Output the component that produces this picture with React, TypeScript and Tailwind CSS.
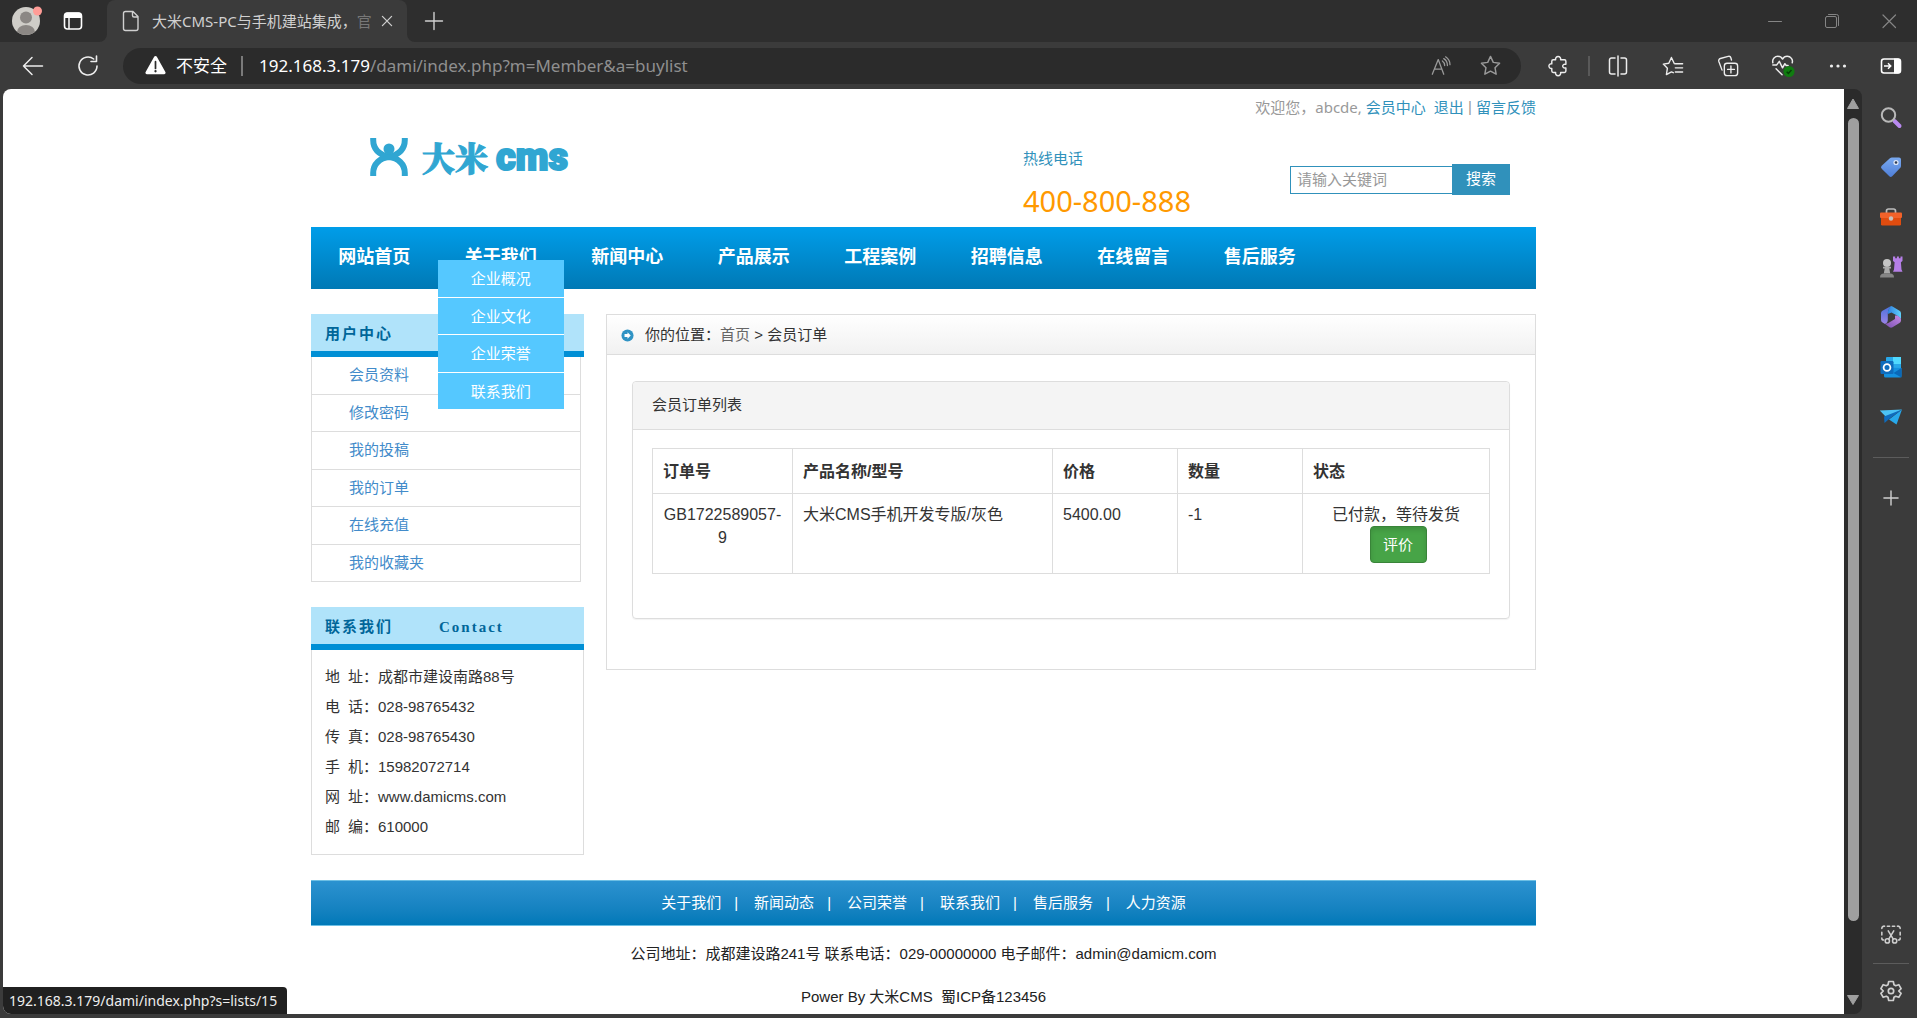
import type { ReactNode } from "react";

const NAV = ["网站首页", "关于我们", "新闻中心", "产品展示", "工程案例", "招聘信息", "在线留言", "售后服务"];
const ABOUT_MENU = ["企业概况", "企业文化", "企业荣誉", "联系我们"];
const MEMBER_MENU = ["会员资料", "修改密码", "我的投稿", "我的订单", "在线充值", "我的收藏夹"];
const CONTACT: [string, string, string][] = [
  ["地", "址", "成都市建设南路88号"],
  ["电", "话", "028-98765432"],
  ["传", "真", "028-98765430"],
  ["手", "机", "15982072714"],
  ["网", "址", "www.damicms.com"],
  ["邮", "编", "610000"],
];
const FOOTER_LINKS = ["关于我们", "新闻动态", "公司荣誉", "联系我们", "售后服务", "人力资源"];

type IconProps = { children: ReactNode; size?: string; stroke?: string };

function Line({ children, size = "size-6", stroke = "1.5" }: IconProps) {
  return (
    <svg
      viewBox="0 0 24 24"
      className={size}
      fill="none"
      stroke="currentColor"
      strokeWidth={stroke}
      strokeLinecap="round"
      strokeLinejoin="round"
      aria-hidden="true"
    >
      {children}
    </svg>
  );
}

function ChromeButton({ label, className, children }: { label: string; className: string; children: ReactNode }) {
  return (
    <button type="button" aria-label={label} className={`flex shrink-0 items-center justify-center ${className}`}>
      {children}
    </button>
  );
}

function TabStrip() {
  return (
    <div className="flex h-[42px] shrink-0 bg-[linear-gradient(#2e2e2e_50%,#3b3b3b_50%)]">
      <div className="flex w-[107px] shrink-0 items-center rounded-br-lg bg-[#2e2e2e] pl-3">
        <ChromeButton label="个人资料" className="size-8">
          <svg viewBox="0 0 32 32" className="size-8" aria-hidden="true">
            <defs>
              <clipPath id="avatar">
                <circle cx="14" cy="16" r="14" />
              </clipPath>
            </defs>
            <g clipPath="url(#avatar)">
              <rect width="32" height="32" fill="#cfcdc8" />
              <circle cx="14" cy="12.500" r="6" fill="#8b8784" />
              <ellipse cx="14" cy="27" rx="9" ry="7" fill="#8b8784" />
            </g>
            <circle cx="25.500" cy="6" r="4.500" fill="#ff9c96" />
          </svg>
        </ChromeButton>
        <ChromeButton label="标签页操作" className="ml-[17px] size-6">
          <svg viewBox="0 0 24 24" className="size-6" aria-hidden="true">
            <rect x="3.500" y="4" width="17" height="16" rx="3" fill="none" stroke="#fff" strokeWidth="1.600" />
            <path d="M3 7a3.500 3.500 0 0 1 3.500-3.500h11A3.500 3.500 0 0 1 21 7v2H3z" fill="#fff" />
            <path d="M8 9v11" stroke="#fff" strokeWidth="1.500" />
          </svg>
        </ChromeButton>
      </div>
      <div className="flex w-[300px] shrink-0 items-center rounded-t-lg bg-[#3b3b3b] pr-2 pl-3 text-[#d0d0d0]">
        <Line stroke="1.4">
          <path d="M6.500 2.500h7.500l5 5v12a2 2 0 0 1-2 2H6.500a2 2 0 0 1-2-2v-15a2 2 0 0 1 2-2zM13.500 2.500v4a1.500 1.500 0 0 0 1.500 1.500h4" />
        </Line>
        <span className="ml-[9px] min-w-0 flex-1 text-[15px] whitespace-nowrap">
          大米CMS-PC与手机建站集成，
          <span className="text-[#777]">官</span>
        </span>
        <ChromeButton label="关闭标签页" className="size-6">
          <Line size="size-5">
            <path d="m6.500 6.500 11 11M17.500 6.500l-11 11" />
          </Line>
        </ChromeButton>
      </div>
      <div className="flex min-w-0 flex-1 items-center rounded-bl-lg bg-[#2e2e2e] text-[#d0d0d0]">
        <ChromeButton label="新建标签页" className="w-[53px]">
          <Line stroke="1.400">
            <path d="M12 3.500v17M3.500 12h17" />
          </Line>
        </ChromeButton>
        <div className="ml-auto flex text-[#858585]">
          <ChromeButton label="最小化" className="w-[57px]">
            <Line stroke="1">
              <path d="M5.500 12.500h13" />
            </Line>
          </ChromeButton>
          <ChromeButton label="还原" className="w-[57px]">
            <Line stroke="1">
              <rect x="5.500" y="7.500" width="11" height="11" rx="1.500" />
              <path d="M8.500 5.500h8a2 2 0 0 1 2 2v9" />
            </Line>
          </ChromeButton>
          <ChromeButton label="关闭" className="w-[57px]">
            <Line stroke="1.200">
              <path d="m6 6 12.500 12.500M18.500 6 6 18.500" />
            </Line>
          </ChromeButton>
        </div>
      </div>
    </div>
  );
}

function Toolbar() {
  return (
    <div className="flex h-[47px] shrink-0 items-center text-[#ededed]">
      <ChromeButton label="后退" className="w-[66px]">
        <Line stroke="1.500">
          <path d="M21.500 12h-19M11 3.500 2.500 12l8.500 8.500" />
        </Line>
      </ChromeButton>
      <ChromeButton label="刷新" className="w-[44px]">
        <Line stroke="1.600">
          <path d="M21 12a9 9 0 1 1-3.300-7M20.500 2v5.500h-5.500" />
        </Line>
      </ChromeButton>
      <div className="ml-[13px] flex h-9 min-w-0 flex-1 items-center rounded-full bg-[#2b2b2b] pr-[14px] pl-[21px]">
        <svg viewBox="0 0 24 24" className="size-[23px] shrink-0" aria-hidden="true">
          <path d="M10.600 2.800a1.600 1.600 0 0 1 2.800 0l8.900 16a1.600 1.600 0 0 1-1.400 2.400H3.100a1.600 1.600 0 0 1-1.400-2.400z" fill="#fff" />
          <path d="M12 8v7" stroke="#2b2b2b" strokeWidth="1.800" strokeLinecap="round" />
          <circle cx="12" cy="18" r="1.200" fill="#2b2b2b" />
        </svg>
        <span className="ml-[9px] shrink-0 text-[17px] text-white">不安全</span>
        <span className="mr-4 ml-[14px] h-5 w-[2px] shrink-0 bg-[#7a7a7a]" />
        <span className="min-w-0 flex-1 truncate text-[17px] text-[#8f8f8f]">
          <span className="text-white">192.168.3.179</span>/dami/index.php?m=Member&amp;a=buylist
        </span>
        <div className="flex gap-[7px] text-[#9a9a9a]">
          <ChromeButton label="大声朗读" className="w-[50px]">
            <Line size="size-[22px]" stroke="1.400">
              <path d="M2.500 21 9 5l6 16M5 15.500h8M13.500 6.500c1.500 1 2.500 2.800 2.500 5M15 4c2.500 1.500 4 4 4 7.500M17 2c3 2 4.800 5 4.800 8.500" />
            </Line>
          </ChromeButton>
          <ChromeButton label="收藏此页" className="w-[34px]">
            <Line size="size-[23px]" stroke="1.500">
              <path d="m12 2.500 2.900 6.200 6.600.9-4.800 4.700 1.200 6.800L12 17.900l-5.900 3.200 1.200-6.800-4.800-4.700 6.600-.9z" />
            </Line>
          </ChromeButton>
        </div>
      </div>
      <ChromeButton label="扩展" className="ml-[7px] w-[60px]">
        <Line size="size-[23px]">
          <path d="M5 7.500A1.500 1.500 0 0 1 6.500 6H9a2.700 2.700 0 1 1 5.200 0h4a1.500 1.500 0 0 1 1.500 1.500v3.300h-1a1.900 1.900 0 1 0 0 3.700h1v3.300a1.500 1.500 0 0 1-1.500 1.500h-4a2.700 2.700 0 1 1-5.200 0H6.500A1.500 1.500 0 0 1 5 17.800v-2.700a2.500 2.500 0 1 1 0-4.900z" />
        </Line>
      </ChromeButton>
      <span className="h-5 w-[2px] shrink-0 bg-[#595959]" />
      <ChromeButton label="分屏" className="w-[55px]">
        <Line>
          <path d="M9 4H5.500a2 2 0 0 0-2 2v12a2 2 0 0 0 2 2H9M15 4h3.500a2 2 0 0 1 2 2v12a2 2 0 0 1-2 2H15M12 2v20" />
        </Line>
      </ChromeButton>
      <ChromeButton label="收藏夹" className="w-[55px]">
        <Line size="size-[22px]">
          <path d="M13.500 9.500 10.300 2.700 7.400 9l-6 .9 4.500 4.500-1.100 7 5.500-3 2 .9M14.500 9.500h8M14.500 14h8M14.500 18.500h8" />
        </Line>
      </ChromeButton>
      <ChromeButton label="集锦" className="w-[55px]">
        <Line size="size-[22px]">
          <rect x="8" y="9" width="14.500" height="13.500" rx="3" />
          <path d="M15.200 12v7.500M11.500 15.700h7.500M5.500 16.500 2 7a2.500 2.500 0 0 1 1.700-3.200l8.500-2.300a2.500 2.500 0 0 1 3 1.800l.6 2.200" />
        </Line>
      </ChromeButton>
      <ChromeButton label="浏览器概要" className="w-[55px]">
        <svg viewBox="0 0 26 26" className="size-6" fill="none" aria-hidden="true">
          <path
            d="M2 9.500C1 5 4.500 2.500 7.500 2.500c2.500 0 4 1.300 5 3 1-1.700 2.500-3 5-3 4 0 6.500 3.500 5.500 7M2 12h4l3-4 3.500 7 2.500-4.500 1.500 2h2M5.500 16l6.500 6.500"
            stroke="#ededed"
            strokeWidth="1.600"
            strokeLinecap="round"
            strokeLinejoin="round"
          />
          <circle cx="19.500" cy="19" r="6" fill="#107c10" />
          <path d="m17 19.200 1.800 1.800 3.400-3.700" stroke="#063f06" strokeWidth="1.600" />
        </svg>
      </ChromeButton>
      <ChromeButton label="设置及其他" className="w-[55px]">
        <svg viewBox="0 0 24 24" className="size-6" fill="currentColor" aria-hidden="true">
          <circle cx="5.500" cy="12" r="1.600" />
          <circle cx="12" cy="12" r="1.600" />
          <circle cx="18.500" cy="12" r="1.600" />
        </svg>
      </ChromeButton>
      <ChromeButton label="侧边栏" className="w-[52px]">
        <svg viewBox="0 0 24 24" className="size-6" fill="none" aria-hidden="true">
          <rect x="2.500" y="5" width="19" height="14" rx="2.500" stroke="#fff" strokeWidth="1.600" />
          <path d="M15 4.500h4a2.500 2.500 0 0 1 2.500 2.500v10a2.500 2.500 0 0 1-2.500 2.500h-4z" fill="#fff" />
          <path d="M5 12h6.500M9 9.200l2.800 2.800L9 14.800" stroke="#fff" strokeWidth="1.400" />
        </svg>
      </ChromeButton>
    </div>
  );
}

function EdgeSidebar() {
  const slot = "h-[50px] w-full";
  return (
    <aside className="ml-[3px] flex w-[52px] shrink-0 flex-col items-center pt-[3px] text-[#cfcfcf]">
      <ChromeButton label="搜索" className={slot}>
        <svg viewBox="0 0 24 24" className="size-6" fill="none" aria-hidden="true">
          <path d="m15.500 16 5 5" stroke="#b98af0" strokeWidth="4" strokeLinecap="round" />
          <circle cx="9.500" cy="10" r="6.700" stroke="#b9b9b9" strokeWidth="2" />
        </svg>
      </ChromeButton>
      <ChromeButton label="购物" className={slot}>
        <svg viewBox="0 0 24 24" className="size-6" aria-hidden="true">
          <defs>
            <linearGradient id="tag" x1="0" y1="0" x2="0" y2="1">
              <stop offset="0" stopColor="#79a9f0" />
              <stop offset="1" stopColor="#4f7fd8" />
            </linearGradient>
          </defs>
          <path d="M13 2.500h7a2 2 0 0 1 2 2v6.500a3 3 0 0 1-.9 2.100l-7.900 8.200a2 2 0 0 1-2.900 0l-7.600-7.600a2 2 0 0 1 0-2.900l8.200-7.500a3 3 0 0 1 2.100-.8z" fill="url(#tag)" />
          <circle cx="17" cy="7.500" r="2.600" fill="#dfe8f8" />
          <circle cx="17" cy="7.500" r="1.300" fill="#2d3b55" />
        </svg>
      </ChromeButton>
      <ChromeButton label="工具" className={slot}>
        <svg viewBox="0 0 24 24" className="size-6" aria-hidden="true">
          <path d="M7.500 8V6a2 2 0 0 1 2-2h5a2 2 0 0 1 2 2v2" fill="none" stroke="#bdbdbd" strokeWidth="1.700" />
          <rect x="2" y="11" width="20" height="9.500" rx="1.200" fill="#e04c0f" />
          <rect x="1" y="7.500" width="22" height="5.500" rx="1" fill="#f2622a" />
          <circle cx="12" cy="13.500" r="2.200" fill="#c9c2be" />
        </svg>
      </ChromeButton>
      <ChromeButton label="游戏" className={slot}>
        <svg viewBox="0 0 24 24" className="size-6" aria-hidden="true">
          <path d="M14 1.500h2.200v1.700h1.700V1.500h2v1.700h1.600V1.500h2V6l-1.600 1.200.6 7.300 1 2.300h-9.500l1-2.300.6-7.300L14 6z" fill="#b57fe6" />
          <circle cx="8" cy="8" r="4" fill="#c4c4c4" />
          <path d="M4 11.700h8v1.800h-1.700l.9 5H4.800l.9-5H4z" fill="#aaa" />
          <path d="M1 22.500c0-3 1.800-4 3.500-4h7c1.700 0 3.500 1 3.500 4z" fill="#858585" />
        </svg>
      </ChromeButton>
      <ChromeButton label="Microsoft 365" className={slot}>
        <svg viewBox="0 0 24 24" className="size-6" aria-hidden="true">
          <defs>
            <linearGradient id="m1" x1="0" y1="0" x2="1" y2="0">
              <stop offset="0" stopColor="#2e7fe0" />
              <stop offset="1" stopColor="#5fd0fa" />
            </linearGradient>
            <linearGradient id="m2" x1="0" y1="0" x2="0" y2="1">
              <stop offset="0" stopColor="#4a72dd" />
              <stop offset="1" stopColor="#9a83e6" />
            </linearGradient>
            <linearGradient id="m3" x1="0" y1="1" x2="1" y2="0">
              <stop offset="0" stopColor="#7a4fb0" />
              <stop offset="1" stopColor="#c58ae6" />
            </linearGradient>
          </defs>
          <path d="M12 1 3.500 5.700A3 3 0 0 0 2 8.300V15a3 3 0 0 0 1.500 2.600L6 19c2.200-.9 2.800-2.500 2.800-4.500V9c0-3 1-5 3.200-8z" fill="url(#m2)" />
          <path d="M12 1c-2.500 2.500-3.200 5-3.200 8l3.700-1.600L18 10.500c2 1.200 3.500 2.500 4 4.500V8.300a3 3 0 0 0-1.500-2.600L13.500 1.400A3 3 0 0 0 12 1z" fill="url(#m1)" />
          <path d="M22 14.500c-.3-1.800-2-3-4-4l-2 0v3.500l-5 3c-2 1.200-4 2-5.500 1.500l5 3.700a3 3 0 0 0 3 0l7-4.200A3 3 0 0 0 22 15.500z" fill="url(#m3)" />
        </svg>
      </ChromeButton>
      <ChromeButton label="Outlook" className={slot}>
        <svg viewBox="0 0 24 24" className="size-6" aria-hidden="true">
          <rect x="7" y="2" width="15" height="13" rx="1" fill="#28a8ea" />
          <rect x="14" y="2" width="8" height="7" fill="#50d9ff" />
          <path d="M5 12.500 22.500 13v8a1.500 1.500 0 0 1-1.500 1.500H6.500A1.500 1.500 0 0 1 5 21z" fill="#1490df" />
          <path d="m22.500 13-8 5 8 4.500z" fill="#0a68b8" />
          <rect x="1.500" y="6" width="13" height="13" rx="1.200" fill="#0f6cbd" />
          <circle cx="8" cy="12.500" r="3.400" fill="none" stroke="#fff" strokeWidth="1.800" />
        </svg>
      </ChromeButton>
      <ChromeButton label="Drop" className={slot}>
        <svg viewBox="0 0 24 24" className="size-6" aria-hidden="true">
          <path d="M.800 5.500 23 4.500 8 13z" fill="#4cc3f5" />
          <path d="M23 4.500 17.500 19.500 10 14.500z" fill="#28a8ea" />
          <path d="M23 4.500 5 11.500l.5 6.500 4-3.500z" fill="#0f6cbd" />
        </svg>
      </ChromeButton>
      <hr className="mt-[15px] w-9 border-[#5c5c5c]" />
      <ChromeButton label="自定义" className="mt-[15px] h-[50px] w-full">
        <Line size="size-5" stroke="1.700">
          <path d="M12 3.500v17M3.500 12h17" />
        </Line>
      </ChromeButton>
      <ChromeButton label="截图" className="mt-auto h-[50px] w-full">
        <Line size="size-[22px]" stroke="1.700">
          <path d="M5 3.500a2.500 2.500 0 0 0-3 2.500M2 10v3M2 16.500a2 2 0 0 0 2 2M8 3.500h2.500M13.500 3.500H16M19 3.500A2.500 2.500 0 0 1 22 6M22 10v3M22 16.500a2 2 0 0 1-2 2" />
          <path d="m9 8.500 5.500 9M15 8.500l-5.500 9" />
          <circle cx="8" cy="19.500" r="2.300" />
          <circle cx="16" cy="19.500" r="2.300" />
        </Line>
      </ChromeButton>
      <hr className="mt-1 w-9 border-[#5c5c5c]" />
      <ChromeButton label="设置" className="h-[54px] w-full">
        <Line size="size-6" stroke="1.700">
          <path d="M9.700 2.500h4.600l.7 3.200 1.700 1 3.100-1 2.300 4-2.400 2.300 2.400 2.300-2.300 4-3.100-1-1.700 1-.7 3.200H9.700L9 18.300l-1.700-1-3.100 1-2.300-4L4.300 12 1.900 9.700l2.300-4 3.100 1 1.700-1z" />
          <circle cx="12" cy="12" r="2.700" />
        </Line>
      </ChromeButton>
    </aside>
  );
}

function Scrollbar() {
  return (
    <div className="flex w-[18px] shrink-0 flex-col items-center rounded-r-lg bg-[#2b2b2b] pt-[9px] pb-2">
      <svg viewBox="0 0 12 12" className="size-3" fill="#9f9f9f" aria-hidden="true">
        <path d="M6 1 11.500 10.500H.500z" stroke="#9f9f9f" strokeLinejoin="round" />
      </svg>
      <div className="mt-2 mb-[73px] w-[11px] flex-1 rounded-full bg-[#9f9f9f]" />
      <svg viewBox="0 0 12 12" className="size-3" fill="#9f9f9f" aria-hidden="true">
        <path d="M6 10.500 11.500 1.500H.500z" stroke="#9f9f9f" strokeLinejoin="round" />
      </svg>
    </div>
  );
}

function SiteHeader() {
  return (
    <header>
      <div className="flex h-[37px] items-center justify-end font-['Noto_Sans','Noto_Sans_CJK_SC',sans-serif] text-[15px] whitespace-pre text-[#999]">
        <span>欢迎您，abcde, </span>
        <a href="#member" className="text-[#3091bb]">会员中心</a>
        <a href="#logout" className="ml-2 text-[#3091bb]">退出</a>
        <span className="font-['Liberation_Sans',sans-serif]"> | </span>
        <a href="#feedback" className="text-[#3091bb]">留言反馈</a>
      </div>
      <div className="grid min-h-[101px] grid-cols-[712px_1fr_auto] items-start">
        <a href="#home" aria-label="大米CMS" className="flex items-center pt-[11px] pl-[58px] text-[#30a6d2]">
          <svg viewBox="0 0 40 40" className="size-10" fill="none" aria-hidden="true">
            <path d="M4.200 1v2C4.200 12 10 17.500 20 20 30 17.500 35.800 12 35.800 3V1M4.200 39v-3C4.200 27 11 21 20 20c9 1 15.800 7 15.800 16v3" stroke="currentColor" strokeWidth="6" />
            <circle cx="20" cy="12" r="5.500" fill="currentColor" />
          </svg>
          <span className="ml-[13px] font-['Noto_Serif_CJK_SC','Noto_Sans_CJK_SC',serif] text-[33px] leading-10 font-black [-webkit-text-stroke:1px_#30a6d2]">大米</span>
          <span className="ml-2 font-['Roboto',sans-serif] text-[38px] leading-10 font-black [-webkit-text-stroke:2px_#30a6d2]">cms</span>
        </a>
        <div className="pt-[22px] font-['Noto_Sans','Noto_Sans_CJK_SC',sans-serif]">
          <p className="text-[15px] leading-5 text-[#3091bb]">热线电话</p>
          <p className="mt-[13px] text-[29px] leading-10 text-[#ff9900]">400-800-888</p>
        </div>
        <form className="flex items-center pt-[38px] pr-[26px] text-[15px]" onSubmit={(e) => e.preventDefault()}>
          <input
            type="text"
            aria-label="关键词"
            placeholder="请输入关键词"
            className="h-7 w-[162px] border border-r-0 border-[#3091bb] px-[6px] placeholder:text-[#999]"
          />
          <button type="submit" className="h-[31px] w-[58px] bg-[#3091bb] text-white">搜索</button>
        </form>
      </div>
      <nav className="h-[62px] bg-linear-to-b from-[#009de9] to-[#0079b5]">
        <ul className="grid max-w-[1012px] grid-cols-8 text-lg font-bold text-white">
          {NAV.map((name) => (
            <li key={name} className="relative">
              <a href={`#${name}`} className="flex h-[60px] items-center justify-center">{name}</a>
              {name === "关于我们" && (
                <ul className="absolute top-[33px] left-0 z-10 grid h-[149px] w-full auto-rows-fr gap-px bg-white text-[15px] font-normal">
                  {ABOUT_MENU.map((item) => (
                    <li key={item} className="bg-[#55c8ff]">
                      <a href={`#${item}`} className="flex h-full items-center justify-center pt-px">{item}</a>
                    </li>
                  ))}
                </ul>
              )}
            </li>
          ))}
        </ul>
      </nav>
    </header>
  );
}

function BoxTitle({ children }: { children: ReactNode }) {
  return (
    <h2 className="flex h-[43px] items-center border-b-[6px] border-[#008fd5] bg-[#b0e3fa] px-[14px] pt-1 font-['Liberation_Serif','Noto_Sans_CJK_SC',serif] text-[15px] font-bold tracking-[2px] text-[#006699]">
      {children}
    </h2>
  );
}

function Sidebar() {
  return (
    <div className="flex w-[273px] shrink-0 flex-col gap-[25px]">
      <section>
        <BoxTitle>用户中心</BoxTitle>
        <ul className="mr-[3px] grid h-[225px] auto-rows-fr border-x border-[#ddd]">
          {MEMBER_MENU.map((item) => (
            <li key={item} className="flex items-center border-b border-[#ddd] pl-[37px] text-[15px]">
              <a href={`#${item}`} className="text-[#428bca]">{item}</a>
            </li>
          ))}
        </ul>
      </section>
      <section>
        <BoxTitle>
          联系我们<span className="ml-[46px]">Contact</span>
        </BoxTitle>
        <dl className="border-x border-b border-[#ddd] px-[13px] py-3 text-[15px] leading-[30px] text-[#333]">
          {CONTACT.map(([a, b, value]) => (
            <div key={a + b} className="flex">
              <dt className="flex w-[53px]">
                <span>{a}</span>
                <span className="ml-2">{b}：</span>
              </dt>
              <dd>{value}</dd>
            </div>
          ))}
        </dl>
      </section>
    </div>
  );
}

function Orders() {
  return (
    <main className="min-w-0 flex-1 self-start border border-[#ddd]">
      <div className="flex h-10 items-center border-b border-[#ddd] bg-linear-to-b from-white to-[#f1f1f1] pt-[2px] pl-[14px] text-[15px] whitespace-pre text-[#333]">
        <svg viewBox="0 0 14 14" className="mr-[11px] size-[13px]" aria-hidden="true">
          <circle cx="7" cy="7" r="6.500" fill="#2f93c4" />
          <path d="M7 3.500 10.500 7 7 10.500V8.500H3.800v-3H7z" fill="#fff" />
        </svg>
        <span>你的位置：</span>
        <a href="#home" className="text-[#666]">首页</a>
        <span> &gt; 会员订单</span>
      </div>
      <section className="mx-[25px] mt-[26px] mb-[50px] rounded border border-[#ddd] shadow-[0_1px_1px_rgba(0,0,0,0.05)]">
        <h1 className="flex h-[48px] items-center rounded-t border-b border-[#ddd] bg-[#f4f4f4] px-[19px] text-[15px] text-[#333]">会员订单列表</h1>
        <div className="px-[19px] pt-[18px] pb-11">
          <table className="w-full table-fixed border-collapse text-base leading-[23px] text-[#333] [&_td]:border [&_td]:border-[#ddd] [&_td]:px-[10px] [&_td]:pt-[9px] [&_td]:pb-[10px] [&_td]:align-top [&_th]:border [&_th]:border-[#ddd] [&_th]:px-[10px] [&_th]:text-left">
            <colgroup>
              <col className="w-[140px]" />
              <col className="w-[260px]" />
              <col className="w-[125px]" />
              <col className="w-[125px]" />
              <col />
            </colgroup>
            <thead>
              <tr className="h-[45px]">
                <th scope="col">订单号</th>
                <th scope="col">产品名称/型号</th>
                <th scope="col">价格</th>
                <th scope="col">数量</th>
                <th scope="col">状态</th>
              </tr>
            </thead>
            <tbody>
              <tr>
                <td className="text-center">GB1722589057-9</td>
                <td>大米CMS手机开发专版/灰色</td>
                <td>5400.00</td>
                <td>-1</td>
                <td className="text-center">
                  <p>已付款，等待发货</p>
                  <div className="flex justify-center pl-1">
                    <button
                      type="button"
                      className="h-[37px] w-[57px] rounded border border-[#398439] bg-[#47a447] text-[15px] text-white shadow-[inset_0_3px_5px_rgba(0,0,0,0.125)]"
                    >
                      评价
                    </button>
                  </div>
                </td>
              </tr>
            </tbody>
          </table>
        </div>
      </section>
    </main>
  );
}

function SiteFooter() {
  return (
    <footer className="mt-[25px] text-[15px] text-[#222]">
      <ul className="flex h-[46px] items-center justify-center border-y border-[#6dbfe4] bg-linear-to-b from-[#2b92d0] to-[#0079b8] text-white">
        {FOOTER_LINKS.map((item, i) => (
          <li key={item} className="flex">
            {i > 0 && <span className="mr-4 ml-[13px]">|</span>}
            <a href={`#${item}`}>{item}</a>
          </li>
        ))}
      </ul>
      <p className="mt-[18px] text-center leading-5">公司地址：成都建设路241号 联系电话：029-00000000 电子邮件：admin@damicm.com</p>
      <p className="mt-[23px] text-center leading-5 whitespace-pre">Power By 大米CMS  蜀ICP备123456</p>
    </footer>
  );
}

export default function App() {
  return (
    <div
      lang="zh-CN"
      className="flex h-screen flex-col overflow-hidden bg-[#3b3b3b] font-['Noto_Sans','Noto_Sans_CJK_SC',sans-serif]"
    >
      <TabStrip />
      <Toolbar />
      <div className="flex min-h-0 flex-1">
        <div className="relative mb-1 ml-[3px] min-w-0 flex-1 overflow-hidden rounded-l-lg bg-white">
          <div className="mx-auto w-full max-w-[1225px] font-['Liberation_Sans','Noto_Sans_CJK_SC',sans-serif]">
            <SiteHeader />
            <div className="mt-[25px] flex gap-[22px]">
              <Sidebar />
              <Orders />
            </div>
            <SiteFooter />
          </div>
          <div className="absolute bottom-0 left-0 rounded-tr bg-[#202020] pr-[10px] pl-[6px] text-[14px] leading-[27px] text-[#eee]">
            192.168.3.179/dami/index.php?s=lists/15
          </div>
        </div>
        <div className="mb-1 flex">
          <Scrollbar />
        </div>
        <EdgeSidebar />
      </div>
    </div>
  );
}
